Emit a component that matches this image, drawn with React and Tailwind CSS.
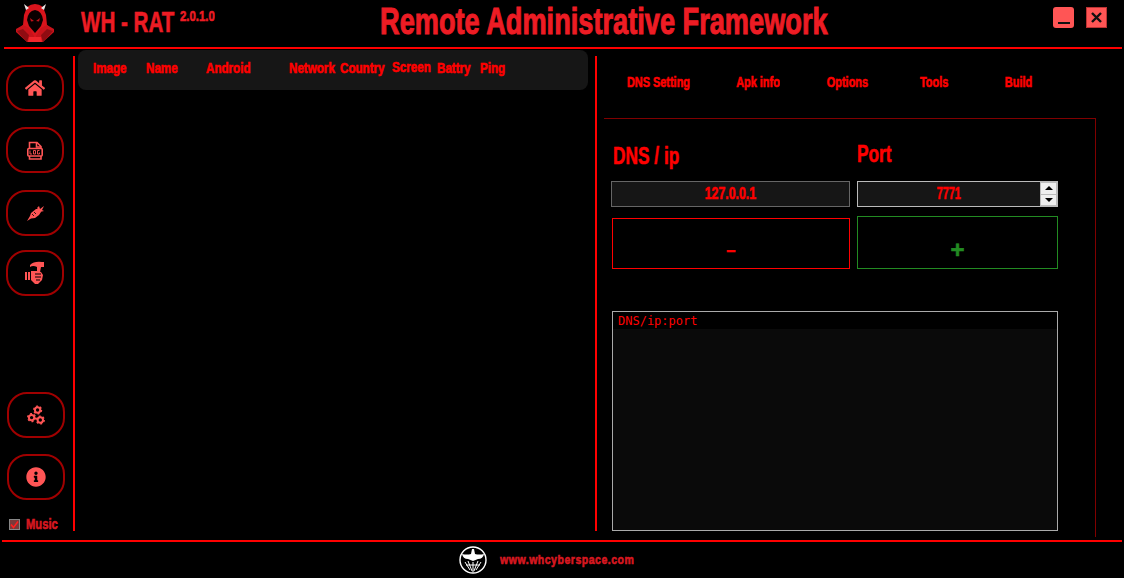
import React from 'react';
import { FaHome, FaInfoCircle } from 'react-icons/fa';

const heavy = "[font-family:'Liberation_Sans',sans-serif] font-bold [-webkit-text-stroke:0.6px_currentColor]";
const squeezed = 'inline-block whitespace-nowrap';

const HoodLogo = () => (
  <svg width="42" height="42" viewBox="0 0 42 42">
    {/* hood */}
    <path d="M13 6 Q21 0 29 6 L32 14 L33 24 L37 28 L24 40 L18 40 L5 28 L9 24 L10 14 Z" fill="#d8141c" />
    {/* horns */}
    <path d="M10 3 L15 7 L12 9 Z M32 3 L27 7 L30 9 Z" fill="#e8e4e4" />
    {/* face */}
    <path d="M21 9 Q28 10 29 19 L27 25 L21 32 L15 25 L13 19 Q14 10 21 9 Z" fill="#0a0000" />
    <path d="M16 17 L20 20 L17 20.5 Z M26 17 L22 20 L25 20.5 Z" fill="#c01018" />
    {/* cloak */}
    <path d="M9 24 L15 27 L20 35 L20 41 L13 41 L2 31 L2 28 Z" fill="#c8121a" />
    <path d="M33 24 L27 27 L22 35 L22 41 L29 41 L40 31 L40 28 Z" fill="#c8121a" />
    <path d="M3 30 L9 28 L15 34 L13 41 Z M39 30 L33 28 L27 34 L29 41 Z" fill="#8f0c12" />
    <path d="M15 36 L27 36 L28 41 L14 41 Z" fill="#f0262c" />
  </svg>
);

const LogIcon = () => (
  <svg width="16" height="19" viewBox="0 0 16 19" fill="none" stroke="#ff5555" strokeWidth="1.6">
    <path d="M2.5 7 V1.5 H10 L14 5.5 V7 M2.5 15 V18 H14 V15" />
    <path d="M9.5 1.5 V6 H14" />
    <rect x="0.8" y="7.5" width="14.4" height="7.5" rx="1" fill="#000" />
    <path d="M3 9.5 V13 H5 M6.5 9.5 H8.5 V13 H6.5 Z M12.5 9.5 H10.5 V13 H12.5 V11.5" strokeWidth="0.9" />
  </svg>
);

const SyringeIcon = () => (
  <svg width="17" height="16" viewBox="0 0 17 16" fill="#ff5555">
    <path d="M0 16 L3 11 L4 8 L9 4 L12 4 L14 7 L12 10 L8 13 L4 13.5 Z" />
    <path d="M10 3 L12 1 L13 4 L17 1 L15 5 L17 6 L13 7 Z" />
    <path d="M7 7 L9 9 M5 9 L7 11" stroke="#000" strokeWidth="0.8" />
  </svg>
);

const HandIcon = () => (
  <svg width="20" height="24" viewBox="0 0 20 24" fill="#ff5555">
    <path d="M5 4 Q9 0 17 1 L19 1 L19 6 L16 6 L15 11 L12 11 L12 6 Q8 4 5 6 Z" />
    <path d="M0 11 H2 V19 H0 Z M3 11 H5 V19 H3 Z M6 10 H12 L16 11 L18 14 L17 19 L13 23 L10 23 L6 19 Z" />
    <path d="M10 13 H16 M10 16 H16 M11 19 H15" stroke="#000" strokeWidth="1" />
  </svg>
);

const Gear = ({ cx, cy }) => (
  <g>
    <circle cx={cx} cy={cy} r="2.7" fill="none" stroke="#ff5555" strokeWidth="2" />
    <circle cx={cx} cy={cy} r="3.9" fill="none" stroke="#ff5555" strokeWidth="1.4" strokeDasharray="2 2.08" />
  </g>
);

const GearsIcon = () => (
  <svg width="18" height="20" viewBox="0 0 18 20">
    <Gear cx={10.6} cy={5} />
    <Gear cx={4.6} cy={12.6} />
    <Gear cx={13.3} cy={15} />
  </svg>
);

const ShieldLogo = () => (
  <svg width="28" height="28" viewBox="0 0 28 28">
    <circle cx="14" cy="14" r="13" fill="#000" stroke="#fff" strokeWidth="1.4" />
    <path d="M3 8 Q8 9 12 8 L13 3 L15 3 L16 8 Q20 9 25 8 Q24 13 19 13 L14 15 L9 13 Q4 13 3 8 Z" fill="#fff" />
    <path d="M6 16 L11 24 M9 15 L13 25 M14 16 V26 M19 15 L15 25 M22 16 L17 24 M7 19 L21 19" stroke="#fff" strokeWidth="1" />
  </svg>
);

const SideButton = ({ className, children }) => (
  <button className={`flex h-[46px] w-[58px] items-center justify-center rounded-[20px] border-2 border-[#a00000] ${className}`}>
    {children}
  </button>
);

const columns = ['Image', 'Name', 'Android', 'Network', 'Country', 'Screen', 'Battry', 'Ping'];
const tabs = [
  { label: 'DNS Setting', width: 'w-[100px]' },
  { label: 'Apk info', width: 'w-[100px]' },
  { label: 'Options', width: 'w-[78px]' },
  { label: 'Tools', width: 'w-[96px]' },
  { label: 'Build', width: 'w-[72px]' },
];

export default function App() {
  return (
    <div className={`flex h-[578px] w-[1124px] flex-col overflow-hidden bg-black text-[#ff0000] ${heavy}`}>
      {/* Title bar */}
      <header className="ml-1 mr-[2px] flex h-[49px] shrink-0 items-center border-b-2 border-[#ff0000] pb-[3px]">
        <div className="ml-[10px] w-[67px] shrink-0"><HoodLogo /></div>
        <div className="flex w-[299px] shrink-0 items-start text-[#ed1c24]">
          <span className={`${squeezed} w-[99px] origin-left scale-x-[0.71] text-[29px] leading-none`}>WH - RAT</span>
          <span className={`${squeezed} origin-left scale-x-[0.76] text-[15px] leading-none`}>2.0.1.0</span>
        </div>
        <h1 className={`${squeezed} w-[448px] origin-left scale-x-[0.755] text-[36px] leading-none text-[#ed1c24] [-webkit-text-stroke:1px_#ed1c24]`}>Remote Administrative Framework</h1>
        <div className="ml-auto mr-[15px] mt-[7px] flex items-center gap-[12px] self-start">
          <button className="flex h-[21px] w-[21px] items-end justify-center rounded-[3px] bg-[#ff5555] pb-[4px]">
            <span className="h-[2px] w-[12px] bg-[#111]" />
          </button>
          <button className="flex h-[21px] w-[21px] items-center justify-center border border-[#b33] bg-[#ff5555]">
            <svg width="11" height="11" viewBox="0 0 11 11"><path d="M1 1 L10 10 M10 1 L1 10" stroke="#111" strokeWidth="2.4" /></svg>
          </button>
        </div>
      </header>

      {/* Main */}
      <div className="flex h-[491px] shrink-0">
        {/* Sidebar */}
        <aside className="mb-[9px] mt-[7px] flex w-[75px] shrink-0 flex-col border-r-2 border-[#ff0000] pl-[6px]">
          <SideButton className="mt-[9px]"><FaHome size={20} color="#ff5555" /></SideButton>
          <SideButton className="mt-[16px]"><LogIcon /></SideButton>
          <SideButton className="mt-[17px]"><SyringeIcon /></SideButton>
          <SideButton className="mt-[14px]"><HandIcon /></SideButton>
          <SideButton className="ml-px mt-[96px]"><GearsIcon /></SideButton>
          <SideButton className="ml-px mt-[16px]"><FaInfoCircle size={20} color="#ff5555" /></SideButton>
          <label className="ml-[3px] mt-[17px] flex items-center gap-[6px] text-[14px] leading-none text-[#d81820]">
            <span className="flex h-[11px] w-[11px] shrink-0 items-center justify-center border border-[#888] bg-[#7a3a3a]">
              <svg width="9" height="9" viewBox="0 0 9 9"><path d="M1 4.5 L3.5 7.5 L8 1.5" fill="none" stroke="#ff2020" strokeWidth="1.5" /></svg>
            </span>
            <span className={`${squeezed} origin-left scale-x-[0.8]`}>Music</span>
          </label>
        </aside>

        {/* Clients table */}
        <section className="w-[520px] shrink-0 pl-[3px]">
          <div className="mt-px grid h-[40px] w-[510px] grid-cols-[53px_60px_83px_51px_52px_45px_43px_auto] items-center rounded-[8px] bg-[#161616] pb-[4px] pl-[15px] text-[14px] leading-none">
            {columns.map((col) => (
              <span key={col} className={`${squeezed} origin-left scale-x-[0.83] ${col === 'Screen' ? 'pb-[2px]' : ''}`}>{col}</span>
            ))}
          </div>
        </section>

        {/* Settings */}
        <section className="mb-[9px] mt-[7px] flex w-[529px] shrink-0 flex-col border-l-2 border-[#ff0000]">
          <nav className="flex h-[62px] shrink-0 items-center pb-[10px] pl-[11px] text-[14px] leading-none">
            {tabs.map((tab) => (
              <span key={tab.label} className={`${tab.width} flex shrink-0 justify-center`}>
                <span className={`${squeezed} scale-x-[0.78]`}>{tab.label}</span>
              </span>
            ))}
          </nav>
          <div className="-mb-[6px] ml-[7px] w-[492px] flex-1 border-r border-t border-[#800000] pl-[8px] pt-[22px]">
            <div className="flex">
              <div className="w-[239px] shrink-0">
                <h2 className={`${squeezed} ml-px mt-[2px] origin-left scale-x-[0.72] text-[24px] leading-[26px]`}>DNS / ip</h2>
                <div className="-ml-px mt-[10px] flex h-[26px] w-[239px] items-center justify-center border border-[#666] bg-[#161616] text-[16px] leading-none">
                  <span className={`${squeezed} scale-x-[0.77]`}>127.0.0.1</span>
                </div>
                <button className="mt-[11px] flex h-[51px] w-[238px] items-end justify-center border border-[#ff0000] pb-[9px] text-[16px] leading-none">–</button>
              </div>
              <div className="ml-[6px] w-[201px] shrink-0">
                <h2 className={`${squeezed} origin-left scale-x-[0.72] text-[24px] leading-[26px]`}>Port</h2>
                <div className="mt-[12px] flex h-[26px] w-[201px] items-center border border-[#bbb] bg-[#161616] text-[16px] leading-none">
                  <span className="flex flex-1 justify-center pr-[1px]"><span className={`${squeezed} scale-x-[0.68]`}>7771</span></span>
                  <div className="flex h-full w-[17px] flex-col gap-px bg-[#bbb] p-px">
                    <span className="flex flex-1 items-center justify-center bg-[#eee]"><span className="h-0 w-0 border-x-[4px] border-b-[4px] border-x-transparent border-b-black" /></span>
                    <span className="flex flex-1 items-center justify-center bg-[#eee]"><span className="h-0 w-0 border-x-[4px] border-t-[4px] border-x-transparent border-t-black" /></span>
                  </div>
                </div>
                <button className="mt-[9px] flex h-[53px] w-[201px] items-end justify-center border border-[#228b22] pb-[6px] text-[24px] leading-none text-[#228b22]">+</button>
              </div>
            </div>
            <div className="mt-[42px] h-[220px] w-[446px] border border-[#aaa] bg-[#0a0a0a]">
              <div className="h-[17px] bg-black pl-[5px] text-[12px] font-normal leading-[19px] [-webkit-text-stroke:0] [font-family:'DejaVu_Sans_Mono',monospace]">DNS/ip:port</div>
            </div>
          </div>
        </section>
      </div>

      {/* Footer */}
      <footer className="mx-[2px] flex flex-1 items-center border-t-2 border-[#ff0000] pl-[457px]">
        <ShieldLogo />
        <span className={`${squeezed} ml-[13px] origin-left scale-x-[0.875] text-[12px] leading-none tracking-[0.6px] text-[#d81820]`}>www.whcyberspace.com</span>
      </footer>
    </div>
  );
}
